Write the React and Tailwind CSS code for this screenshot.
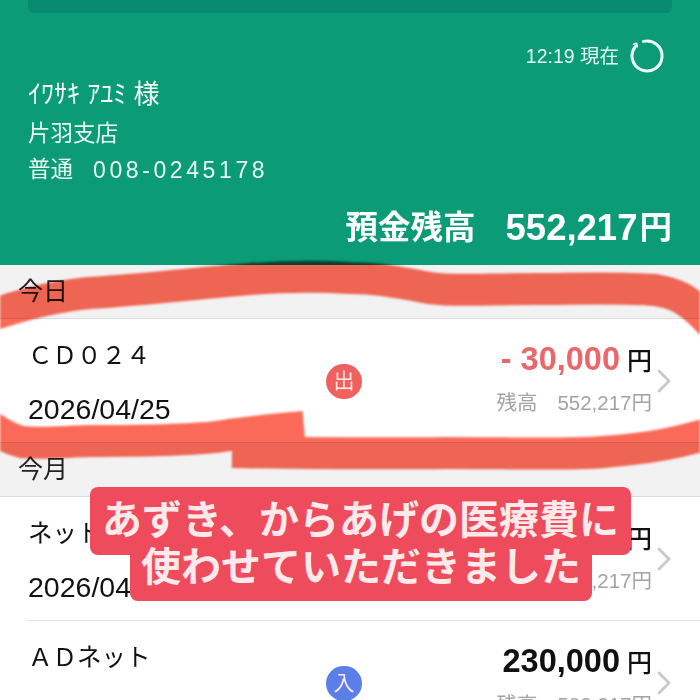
const jp = { fontFamily: '"Liberation Sans","Noto Sans CJK JP",sans-serif' };

function Chevron() {
  return (
    <svg width="14" height="24" viewBox="0 0 14 24" className="shrink-0" fill="none" stroke="#c7c7cc" strokeWidth="2.8" strokeLinecap="round" strokeLinejoin="round">
      <path d="M2 2 L12 12 L2 22" />
    </svg>
  );
}

function Row({ title, date, amount, amountClass, balance, badge, badgeClass }) {
  return (
    <div className="relative flex h-[123px] items-stretch pl-7 pr-[48px]">
      <div className="flex w-[298px] shrink-0 flex-col pt-[22px]">
        <div className="text-[24.5px] leading-[30px] text-[#111] whitespace-nowrap">{title}</div>
        <div className="mt-[23px] text-[28.5px] leading-[30px] text-[#111]">{date}</div>
      </div>
      <div className="flex w-9 shrink-0 items-center justify-center pt-[1px]">
        <div className={`flex h-[35px] w-9 items-center justify-center rounded-full text-[21px] text-[#ffe9e6] ${badgeClass}`}>{badge}</div>
      </div>
      <div className="flex flex-1 flex-col items-end pt-[25px]">
        <div className="flex items-baseline leading-[30px]">
          <span className={`text-[32.5px] font-bold ${amountClass}`}>{amount}</span>
          <span className="ml-[7px] text-[25px] font-medium text-[#111]">円</span>
        </div>
        <div className="mt-[15px] text-[20.5px] leading-[24px] text-[#a3a3a3]">{balance}</div>
      </div>
      <div className="absolute right-[29px] top-[50px]">
        <Chevron />
      </div>
    </div>
  );
}

function Section({ label }) {
  return (
    <div className="flex h-[54px] items-center border-b border-[#dcdcdc] bg-[#f2f2f2] pl-[18px] pt-[1px] text-[25px] text-[#222]">
      {label}
    </div>
  );
}

export default function App() {
  return (
    <div style={jp} className="relative h-[700px] w-[700px] overflow-hidden bg-white">
      <header className="h-[265px] bg-[#0b9b76] px-7 text-white">
        <div className="h-[13px] rounded-b-md bg-[#088a70]" />
        <div className="mt-[26px] flex items-center justify-end gap-[11px] pr-[8px]">
          <span className="text-[19.5px] leading-[32px] text-[#e6f6f0]">12:19 現在</span>
          <svg width="34" height="34" viewBox="0 0 34 34" fill="none" stroke="#eefaf5" strokeWidth="3" strokeLinecap="round" strokeLinejoin="round">
            <path d="M13.5 2.4 A15 15 0 1 1 5.5 7.4" />
            <path d="M3.6 5.2 L6.6 4.2 L7.4 7.6" strokeWidth="1.6" />
          </svg>
        </div>
        <div className="mt-[3px] text-[26px] leading-[36px] text-[#f2fbf8] whitespace-nowrap">ｲﾜｻｷ ｱﾕﾐ 様</div>
        <div className="mt-[4px] text-[22.5px] leading-[36px] text-[#eaf8f3]">片羽支店</div>
        <div className="flex text-[22.5px] leading-[36px] text-[#eaf8f3]">
          普通<span className="ml-[20px] text-[23px] tracking-[3.6px]">008-0245178</span>
        </div>
        <div className="mt-[20px] flex items-center justify-end text-[32.5px] font-bold leading-[40px]">
          <span>預金残高</span>
          <span className="ml-[30px] text-[36.5px]">552,217</span>
          <span className="ml-[2px]">円</span>
        </div>
      </header>

      <Section label="今日" />
      <div className="border-b border-[#dcdcdc]">
        <Row title="ＣＤ０２４" date="2026/04/25" amount="- 30,000" amountClass="text-[#e8686b]" balance={<><span className="mr-[20px]">残高</span>552,217円</>} badge="出" badgeClass="bg-[#f0605f]" />
      </div>
      <Section label="今月" />
      <Row title="ネットバンク" date="2026/04/25" amount="30,000" amountClass="text-[#111]" balance={<><span className="mr-[20px]">残高</span>582,217円</>} badge="出" badgeClass="bg-[#f0605f]" />
      <div className="ml-7 h-[1px] bg-[#e2e2e2]" />
      <Row title="ＡＤネット" date="2026/04/20" amount="230,000" amountClass="text-[#111]" balance={<><span className="mr-[20px]">残高</span>582,217円</>} badge="入" badgeClass="bg-[#5a7fe8]" />

      <svg className="pointer-events-none absolute left-0 top-0 mix-blend-multiply blur-[1px]" width="700" height="700" viewBox="0 0 700 700" fill="none" stroke="#fb6a58" strokeWidth="32" strokeLinecap="butt" strokeLinejoin="round">
        <path d="M232 452 C300 453 380 454 446 453 C510 453 570 455 603 452 C640 449 680 445 735 425 C745 380 735 345 700 312 C688 302 680 294 655 290 C620 287 570 289 536 289 C480 289 450 292 424 287 C395 282 380 278 350 278 C320 276 290 276 250 279 C200 283 140 290 89 293 C50 297 20 305 -30 322" />
        <path d="M304 427 C270 430 250 432 223 436 C190 441 130 441 89 441 C60 442 40 444 22 442 C5 438 -10 428 -30 410" />
      </svg>

      <div className="absolute left-0 right-0 top-[487px] flex flex-col items-center text-[40px] font-bold leading-[50px] text-[#ffe9eb]">
        <div className="ml-[21px] flex h-[68px] w-[541px] items-center justify-center rounded-lg bg-[#ee4b5c] pb-[3px] whitespace-nowrap">あずき、からあげの医療費に</div>
        <div className="-mt-[10px] ml-[22px] flex h-[56px] w-[462px] items-center justify-center rounded-lg bg-[#ee4b5c] pb-[13px] whitespace-nowrap">使わせていただきました</div>
      </div>
    </div>
  );
}
